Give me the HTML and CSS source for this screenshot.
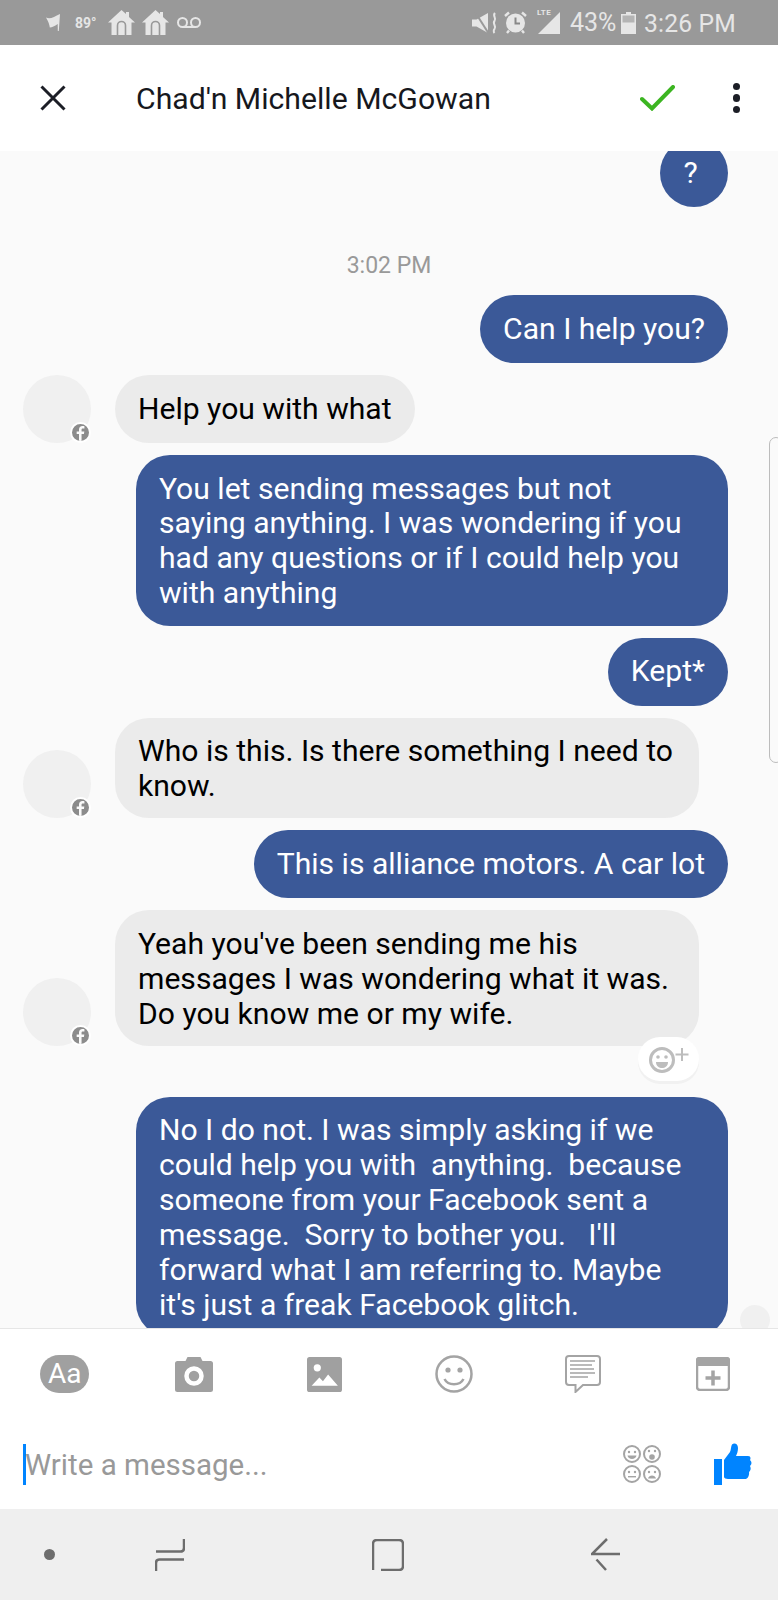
FILE: index.html
```html
<!DOCTYPE html>
<html lang="en">
<head>
<meta charset="utf-8">
<title>Chad'n Michelle McGowan</title>
<link rel="stylesheet" href="styles.css">
</head>
<body>
<div class="app">
  <div class="status">
    <div class="status-left">
      <svg class="ic-flag" viewBox="0 0 14 17"><path d="M0 3.500C4 5.500 8 3 14 0L12.800 17H11.800L11.700 10C8.500 12 6 13.500 3.800 13.500C3.500 11 2.500 7.500 0 3.500Z"/></svg>
      <span class="temp">89°</span>
      <svg class="ic-home" viewBox="0 0 27 25"><path d="M13.500 0L18 4V2H21V7L27 12.500H23.500V25H3.500V12.500H0Z"/><path class="cut" d="M9.500 25V15.500A4 4 0 0 1 17.500 15.500V25"/></svg>
      <svg class="ic-home" viewBox="0 0 27 25"><path d="M13.500 0L18 4V2H21V7L27 12.500H23.500V25H3.500V12.500H0Z"/><path class="cut" d="M9.500 25V15.500A4 4 0 0 1 17.500 15.500V25"/></svg>
      <svg class="ic-vm" viewBox="0 0 24 11"><circle cx="5.500" cy="5.500" r="4.500"/><circle cx="18.500" cy="5.500" r="4.500"/><path d="M5.500 10H18.500"/></svg>
    </div>
    <div class="status-right">
      <svg class="ic-mute" viewBox="0 0 25 22"><path class="solid" d="M0 7.500H4.500L16 1V21L4.500 14.500H0Z"/><path class="slash" d="M3 0L17 22"/><path class="wave" d="M23 1C20 4 25 6 22.500 9C20 12 25 14 22.500 17C21.500 18 21.500 20 22.500 21"/></svg>
      <svg class="ic-alarm" viewBox="0 0 23 23"><path class="ring" d="M1 5L5 1.500M22 5L18 1.500M5 19.500L3 22M18 19.500L20 22"/><circle class="face" cx="11.500" cy="12" r="9.500"/><path class="hands" d="M11.500 6.500V12.500H16"/></svg>
      <div class="signal">
        <span class="lte">LTE</span>
        <svg class="ic-signal" viewBox="0 0 22 22"><path d="M22 0V22H0Z"/></svg>
      </div>
      <span class="pct">43%</span>
      <svg class="ic-batt" viewBox="0 0 15 22"><path class="batt-top" d="M5 0H10V2H15V22H0V2H5Z"/><rect class="batt-empty" x="1.500" y="3.500" width="12" height="7"/></svg>
      <span class="clock">3:26 PM</span>
    </div>
  </div>

  <header class="head">
    <svg class="ic-close" viewBox="0 0 26 26"><path d="M1.500 1.500L24.500 24.500M24.500 1.500L1.500 24.500"/></svg>
    <h1 class="title">Chad'n Michelle McGowan</h1>
    <svg class="ic-check" viewBox="0 0 35 26"><path d="M2 14L12 23.500L33 2"/></svg>
    <div class="dots"><i></i><i></i><i></i></div>
  </header>

  <main class="thread">
    <div class="msg out first">?</div>
    <div class="stamp">3:02 PM</div>
    <div class="msg out">Can I help you?</div>
    <div class="row">
      <div class="avatar"><span class="badge"><svg viewBox="0 0 16 16"><path d="M9 16V9.500H11.200L11.600 7H9V5.500C9 4.700 9.300 4.200 10.300 4.200H11.700V2C11.300 2 10.600 1.900 9.800 1.900C7.900 1.900 6.600 3 6.600 5.200V7H4.400V9.500H6.600V16Z"/></svg></span></div>
      <div class="msg in">Help you with what</div>
    </div>
    <div class="msg out">You let sending messages but not saying anything. I was wondering if you had any questions or if I could help you with anything</div>
    <div class="msg out">Kept*</div>
    <div class="row">
      <div class="avatar"><span class="badge"><svg viewBox="0 0 16 16"><path d="M9 16V9.500H11.200L11.600 7H9V5.500C9 4.700 9.300 4.200 10.300 4.200H11.700V2C11.300 2 10.600 1.900 9.800 1.900C7.900 1.900 6.600 3 6.600 5.200V7H4.400V9.500H6.600V16Z"/></svg></span></div>
      <div class="msg in">Who is this. Is there something I need to know.</div>
    </div>
    <div class="msg out">This is alliance motors. A car lot</div>
    <div class="row row-react">
      <div class="avatar"><span class="badge"><svg viewBox="0 0 16 16"><path d="M9 16V9.500H11.200L11.600 7H9V5.500C9 4.700 9.300 4.200 10.300 4.200H11.700V2C11.300 2 10.600 1.900 9.800 1.900C7.900 1.900 6.600 3 6.600 5.200V7H4.400V9.500H6.600V16Z"/></svg></span></div>
      <div class="msg in">Yeah you've been sending me his messages I was wondering what it was. Do you know me or my wife.</div>
      <div class="react">
        <svg class="ic-react" viewBox="0 0 42 28"><circle cx="14" cy="15" r="11.500"/><circle class="eye" cx="10" cy="12" r="1.800"/><circle class="eye" cx="18" cy="12" r="1.800"/><path class="mouth" d="M8 17H20C20 21 17 23 14 23C11 23 8 21 8 17Z"/><path class="plus" d="M34 3V16M27.500 9.500H40.500"/></svg>
      </div>
    </div>
    <div class="msg out">No I do not. I was simply asking if we could help you with  anything.  because someone from your Facebook sent a message.  Sorry to bother you.   I'll forward what I am referring to. Maybe it's just a freak Facebook glitch.</div>
    <div class="scroll-handle"></div>
    <div class="seen"></div>
  </main>

  <section class="tools">
    <div class="tool-row">
      <span class="aa">Aa</span>
      <svg class="ic-tool ic-camera" viewBox="0 0 38 35"><path d="M2.500 4H10.500L12.500 0H25.500L27.500 4H35.500A2.500 2.500 0 0 1 38 6.500V32.500A2.500 2.500 0 0 1 35.500 35H2.500A2.500 2.500 0 0 1 0 32.500V6.500A2.500 2.500 0 0 1 2.500 4Z"/><circle class="hole" cx="19" cy="19" r="7.500"/></svg>
      <svg class="ic-tool ic-image" viewBox="0 0 34 34"><rect width="34" height="34" rx="2.500"/><circle class="light" cx="10" cy="10.500" r="3.500"/><path class="light" d="M4.500 28L12 20L15.500 23.500L20.500 17L30 28Z"/></svg>
      <svg class="ic-tool ic-smile" viewBox="0 0 38 38"><circle class="line" cx="19" cy="19" r="17.500"/><circle class="fill" cx="13" cy="15" r="2.600"/><circle class="fill" cx="25" cy="15" r="2.600"/><path class="line" d="M9.500 24C13 31 25 31 28.500 24"/></svg>
      <svg class="ic-tool ic-note" viewBox="0 0 36 38"><path class="line" d="M4 1H32A3 3 0 0 1 35 4V27A3 3 0 0 1 32 30H18L10.500 37V30H4A3 3 0 0 1 1 27V4A3 3 0 0 1 4 1Z"/><path class="thin" d="M5 6H30M5 10H27M5 14H29M5 18H30M5 22H23"/></svg>
      <svg class="ic-tool ic-cal" viewBox="0 0 34 34"><path class="fill" d="M3 0H31A3 3 0 0 1 34 3V9H0V3A3 3 0 0 1 3 0Z"/><rect class="line" x="1" y="1" width="32" height="32" rx="3"/><path class="plus" d="M9.500 21H24.500M17 13.500V28.500"/></svg>
    </div>
    <div class="input-row">
      <div class="input"><span class="caret"></span><span class="placeholder">Write a message...</span></div>
      <svg class="ic-emoji" viewBox="0 0 38 38">
        <g class="f"><circle cx="9" cy="9" r="8"/><circle cx="29" cy="9" r="8"/><circle cx="9" cy="29" r="8"/><circle cx="29" cy="29" r="8"/></g>
        <g class="e"><circle cx="6" cy="7" r="1.200"/><circle cx="12" cy="7" r="1.200"/><path d="M4.500 10.500H13.500C13 15 5 15 4.500 10.500Z"/><circle cx="26" cy="6" r="1.200"/><circle cx="32" cy="6" r="1.200"/><circle cx="29" cy="12" r="2.800"/><circle cx="6" cy="27" r="1.200"/><circle cx="12" cy="27" r="1.200"/><rect x="5" y="31" width="8" height="1.400"/><circle cx="26" cy="27" r="1.200"/><circle cx="32" cy="27" r="1.200"/><path d="M25 33.500C26 29.500 32 29.500 33 33.500Z"/></g>
      </svg>
      <svg class="ic-thumb" viewBox="0 0 38 42"><rect y="16" width="8" height="26"/><path d="M10 17L16 9C17 7 17 3 18 1.500C20 -0.500 24 0.500 24 5C24 8 23 11 22 13H34C36.500 13 37 15 36 17C38 19 38 21 36 23C37 25 37 27 35 29C35.500 32 34 36 31 36H14C12 36 10 35 10 34Z"/></svg>
    </div>
  </section>

  <nav class="nav">
    <span class="nav-dot"></span>
    <svg class="ic-nav" viewBox="0 0 30 34"><path d="M1 13.500H25.500Q29 13.500 29 10V1M29 21.500H4.500Q1 21.500 1 25V33"/></svg>
    <svg class="ic-nav ic-square" viewBox="0 0 32 32"><path d="M1 31V5Q1 1 5 1H27Q31 1 31 5V27Q31 31 27 31H9"/></svg>
    <svg class="ic-nav" viewBox="0 0 30 34"><path d="M29 16H1L16 1M5.500 21.500L15 32"/></svg>
  </nav>
</div>
</body>
</html>
```

FILE: styles.css
```css
* { box-sizing: border-box; }
html, body { margin: 0; padding: 0; }
body { font-family: Roboto, "Liberation Sans", sans-serif; background: #fff; }
.app { width: 778px; height: 1600px; display: flex; flex-direction: column; overflow: hidden; }

/* Status bar */
.status { height: 45px; background: #999; color: #e6e6e6; display: flex; justify-content: space-between; align-items: center; padding: 0 43px 0 46px; flex: none; }
.status-left, .status-right { display: flex; align-items: center; }
.status svg { display: block; fill: #e6e6e6; }
.ic-flag { width: 14px; height: 17px; margin-right: 15px; }
.temp { font-size: 14px; font-weight: 700; width: 33px; }
.ic-home { width: 27px; height: 25px; margin-right: 7px; }
.ic-home .cut { fill: none; stroke: #999; stroke-width: 1.600; }
.ic-vm { width: 24px; height: 11px; margin-left: 1px; fill: none !important; stroke: #e6e6e6; stroke-width: 2; }
.ic-mute { width: 25px; height: 22px; margin-right: 7px; }
.ic-mute .slash { stroke: #999; stroke-width: 2; }
.ic-mute .wave { fill: none; stroke: #e6e6e6; stroke-width: 2; }
.ic-alarm { width: 23px; height: 23px; margin-right: 11px; }
.ic-alarm .ring { fill: none; stroke: #e6e6e6; stroke-width: 2.400; }
.ic-alarm .hands { fill: none; stroke: #888; stroke-width: 2; }
.signal { position: relative; width: 22px; height: 23px; margin-right: 10px; }
.lte { position: absolute; left: -1px; top: -3px; font-size: 8px; font-weight: 700; line-height: 10px; letter-spacing: .4px; }
.ic-signal { width: 22px; height: 22px; margin-top: 1px; }
.pct { font-size: 25px; width: 51px; }
.ic-batt { width: 15px; height: 22px; margin-right: 8px; }
.ic-batt .batt-empty { fill: #b4b4b4; }
.clock { width: 91px; font-size: 26.500px; letter-spacing: .2px; white-space: nowrap; transform: scaleX(.93); transform-origin: left center; }

/* Header */
.head { height: 106px; background: #fff; display: flex; align-items: center; padding: 0 38px 0 40px; flex: none; }
.ic-close { width: 26px; height: 26px; fill: none; stroke: #1c1e26; stroke-width: 3; margin-right: 70px; flex: none; }
.title { flex: 1; margin: 0; font-size: 30.200px; font-weight: 400; color: #16181d; }
.ic-check { width: 35px; height: 26px; fill: none; stroke: #3cb521; stroke-width: 4; stroke-linecap: round; margin-right: 58px; }
.dots { display: flex; flex-direction: column; gap: 4px; }
.dots i { display: block; width: 7.500px; height: 7.500px; border-radius: 50%; background: #1c1e26; }

/* Thread */
.thread { position: relative; height: 1177px; background: #fafafa; overflow: hidden; padding: 0 50px 0 23px; display: flex; flex-direction: column; align-items: flex-end; gap: 12px; flex: none; }
.thread > * { flex: none; }
.msg { min-height: 68px; padding: 16.500px 23px 14.500px; border-radius: 34px; font-size: 30.100px; line-height: 34.900px; white-space: pre-wrap; }
.msg.out { background: #3b5998; color: #fff; max-width: 592px; }
.msg.in { background: #ebebeb; color: #000; max-width: 584px; }
.msg.first { margin-top: -12px; width: 68px; padding-left: 0; padding-right: 7px; text-align: center; }
.stamp { align-self: center; font-size: 23px; color: #999; line-height: 26px; margin: 34px 0 4px 27px; }
.row { position: relative; align-self: stretch; display: flex; align-items: flex-end; gap: 24px; padding-right: 29px; }
.row-react { margin-bottom: 38.500px; }
.avatar { position: relative; width: 68px; height: 68px; border-radius: 50%; background: #f0f0f0; flex: none; }
.badge { position: absolute; left: 47px; top: 47px; width: 21px; height: 21px; border: 2px solid #fff; border-radius: 50%; background: #8c8c8c; display: block; overflow: hidden; }
.badge svg { display: block; width: 17px; height: 17px; fill: #fafafa; }
.react { position: absolute; right: 29px; bottom: -35px; width: 61px; height: 44px; border-radius: 22px; background: #fff; box-shadow: 0 3px 0 #f1f1f1; display: flex; align-items: center; justify-content: center; }
.ic-react { width: 42px; height: 28px; fill: none; stroke: #bdbdbd; stroke-width: 3; }
.ic-react .eye { fill: #bdbdbd; stroke: none; }
.ic-react .mouth { fill: #bdbdbd; stroke: none; }
.ic-react .plus { stroke-width: 2; }
.scroll-handle { position: absolute; left: 769px; top: 286px; width: 14px; height: 326px; border: 1.500px solid #bcbcbc; border-radius: 10px; }
.seen { position: absolute; left: 740px; top: 1154px; width: 30px; height: 30px; border-radius: 50%; background: #f0f0f0; }

/* Composer */
.tools { height: 181px; background: #fff; border-top: 1px solid #e6e6e6; flex: none; }
.tool-row { display: grid; grid-template-columns: repeat(6, 1fr); height: 90px; align-items: center; justify-items: center; }
.aa { width: 49px; height: 38px; border-radius: 19px; background: #a0a0a0; color: #fff; font-size: 28px; line-height: 38px; text-align: center; }
.ic-tool { display: block; }
.ic-camera { width: 38px; height: 35px; fill: #a0a0a0; }
.ic-camera .hole { fill: none; stroke: #fff; stroke-width: 4.500; }
.ic-image { width: 35px; height: 35px; fill: #a0a0a0; }
.ic-image .light { fill: #fff; }
.ic-smile { width: 38px; height: 38px; }
.ic-note { width: 36px; height: 38px; }
.ic-cal { width: 34px; height: 34px; }
.ic-tool .line { fill: none; stroke: #a4a4a4; stroke-width: 2.500; }
.ic-tool .fill { fill: #a4a4a4; }
.ic-note .line { fill: #fff; stroke-width: 2; }
.ic-note .thin { fill: none; stroke: #a4a4a4; stroke-width: 1.500; }
.ic-cal .plus { fill: none; stroke: #a4a4a4; stroke-width: 3.500; }
.input-row { height: 90px; display: flex; align-items: center; padding: 0 26px 0 23px; }
.input { flex: 1; display: flex; align-items: center; position: relative; }
.caret { width: 3px; height: 41px; background: #0084ff; flex: none; }
.placeholder { font-size: 29.500px; color: #999; margin: 2px 0 0 -1px; }
.ic-emoji { width: 38px; height: 38px; margin-right: 53px; flex: none; }
.ic-emoji .f circle { fill: none; stroke: #a4a4a4; stroke-width: 2; }
.ic-emoji .e { fill: #a4a4a4; }
.ic-thumb { width: 38px; height: 42px; fill: #0084ff; flex: none; }

/* Navigation */
.nav { height: 91px; background: #efefef; display: grid; grid-template-columns: 121px 218px 218px 1fr; align-items: center; justify-items: center; padding-left: 49px; flex: none; }
.nav > :first-child { justify-self: start; margin-left: -5.500px; }
.nav > :nth-child(2) { justify-self: start; margin-left: -15px; }
.nav > :nth-child(3) { justify-self: start; margin-left: -16px; }
.nav > :nth-child(4) { justify-self: start; margin-left: -15px; }
.nav-dot { width: 11px; height: 11px; border-radius: 50%; background: #6d6d6d; }
.ic-nav { width: 30px; height: 34px; fill: none; stroke: #6d6d6d; stroke-width: 2.500; }
.ic-square { width: 32px; height: 32px; }
```
